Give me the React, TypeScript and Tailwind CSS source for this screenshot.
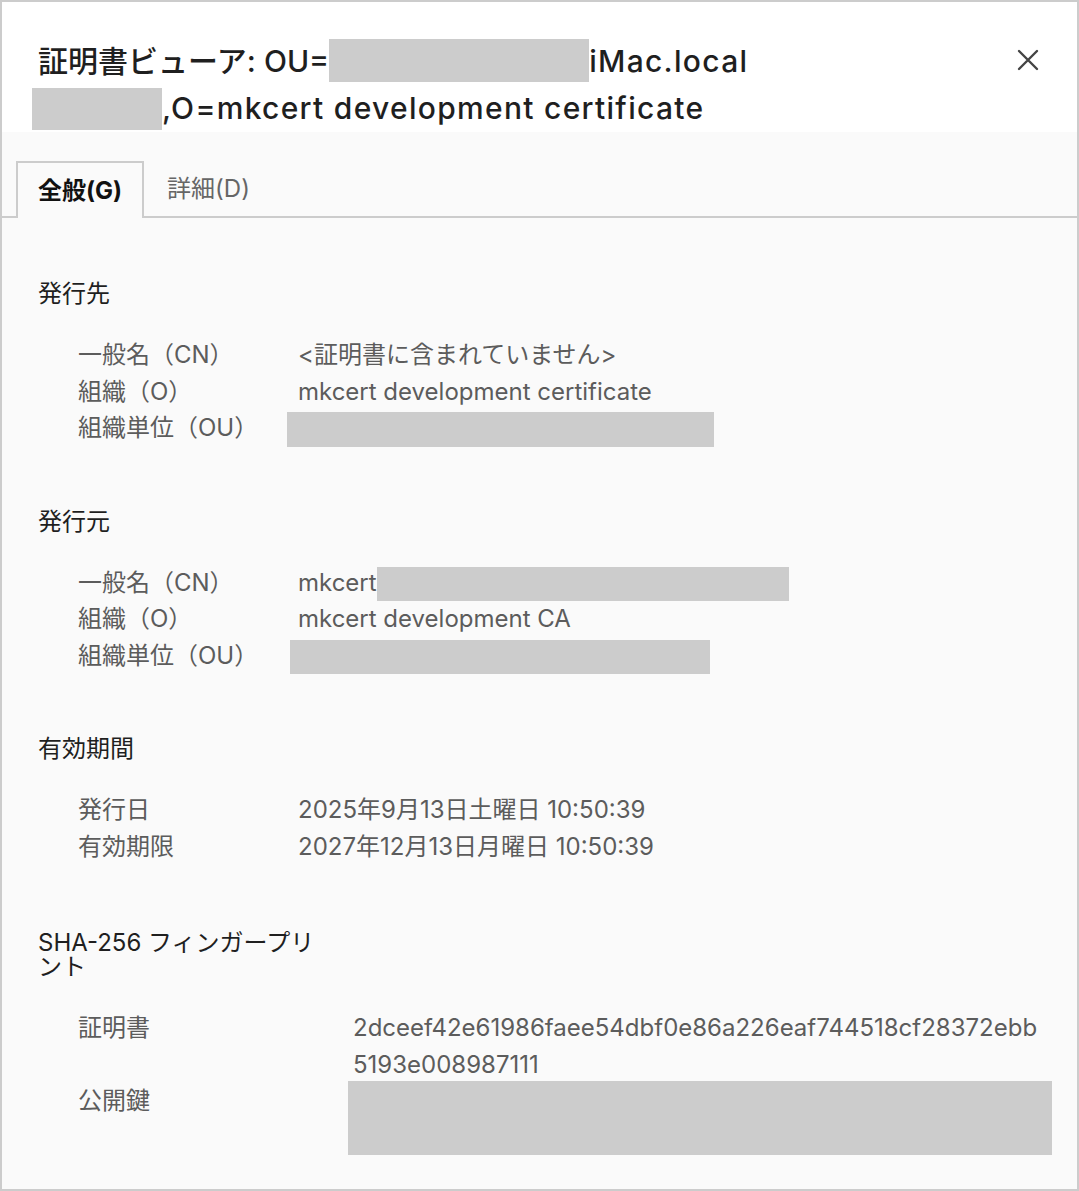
import React from 'react';

const FONT = '"Inter", "Noto Sans CJK JP", sans-serif';

// grey box standing in for redacted text
function Redact({ className }: { className: string }) {
  return <span className={`inline-block bg-[#cccccc] ${className}`} />;
}

function Row({
  label,
  children,
  labelWidth = 'w-[260px]',
}: {
  label: string;
  children: React.ReactNode;
  labelWidth?: string;
}) {
  return (
    <div className="flex leading-[36.5px]">
      <div className={`${labelWidth} shrink-0 pl-[40px] text-[#5c5c5c]`}>{label}</div>
      <div className="text-[#5c5c5c] whitespace-nowrap">{children}</div>
    </div>
  );
}

function Section({
  title,
  children,
  titleClass = '',
}: {
  title: React.ReactNode;
  children: React.ReactNode;
  titleClass?: string;
}) {
  return (
    <section className="flex flex-col">
      <h2 className={`text-[24px] leading-[24px] text-[#1f1f1f] font-normal whitespace-nowrap ${titleClass}`}>{title}</h2>
      <div className="mt-[31px] flex flex-col">{children}</div>
    </section>
  );
}

export default function App() {
  return (
    <div
      className="w-[1079px] h-[1191px] border-2 border-[#cccccc] bg-[#fafafa] flex flex-col overflow-hidden"
      style={{ fontFamily: FONT }}
    >
      {/* Header */}
      <div className="bg-white flex justify-between items-start pl-[36px] pr-[37px] pt-[36px]">
        <h1 className="text-[30px] leading-[47px] text-[#1f1f1f] font-medium whitespace-nowrap">
          <div>
            証明書ビューア: OU=
            <Redact className="w-[260px] h-[43px] align-top mt-[1px]" />
            <span className="tracking-[1.3px]">iMac.local</span>
          </div>
          <div>
            <Redact className="w-[130px] h-[42px] align-top mt-[3px] ml-[-6px]" />
            <span className="tracking-[1.3px]">,O=mkcert development certificate</span>
          </div>
        </h1>
        <button className="mt-[10px] w-[24px] h-[24px] flex items-center justify-center text-[#444444]" aria-label="閉じる">
          <svg width="22" height="22" viewBox="0 0 22 22" fill="none" stroke="currentColor" strokeWidth="2.4" strokeLinecap="round">
            <path d="M2 2 L20 20 M20 2 L2 20" />
          </svg>
        </button>
      </div>

      {/* Tabs */}
      <div className="mt-[29px] flex items-end px-[14px] border-b-2 border-[#cccccc]">
        <div className="h-[57px] -mb-[2px] border-2 border-b-0 border-[#cccccc] bg-[#fafafa] px-[20px] flex items-center text-[24px] font-bold text-[#111111]">
          全般(G)
        </div>
        <div className="h-[55px] px-[23px] flex items-center text-[24px] text-[#666666]">詳細(D)</div>
      </div>

      {/* Content */}
      <div className="px-[36px] pt-[64px] flex flex-col gap-[63px] text-[24px]">
        <Section title="発行先">
          <Row label="一般名（CN）">&lt;証明書に含まれていません&gt;</Row>
          <Row label="組織（O）">mkcert development certificate</Row>
          <Row label="組織単位（OU）">
            <Redact className="w-[427px] h-[35px] align-middle ml-[-11px]" />
          </Row>
        </Section>

        <Section title="発行元">
          <Row label="一般名（CN）">
            mkcert
            <Redact className="w-[412px] h-[34px] align-middle" />
          </Row>
          <Row label="組織（O）">mkcert development CA</Row>
          <Row label="組織単位（OU）">
            <Redact className="w-[420px] h-[34px] align-middle ml-[-8px]" />
          </Row>
        </Section>

        <Section title="有効期間">
          <Row label="発行日">2025年9月13日土曜日 10:50:39</Row>
          <Row label="有効期限">2027年12月13日月曜日 10:50:39</Row>
        </Section>

        <Section
          titleClass="pt-[3px]"
          title={
            <>
              SHA-256 フィンガープリ
              <br />
              ント
            </>
          }
        >
          <Row label="証明書" labelWidth="w-[315px]">
            2dceef42e61986faee54dbf0e86a226eaf744518cf28372ebb
            <br />
            5193e008987111
          </Row>
          <div className="flex leading-[36.5px]">
            <div className="w-[315px] shrink-0 pl-[40px] text-[#5c5c5c]">公開鍵</div>
            <div className="shrink-0 mt-[-2px] ml-[-5px] w-[704px] h-[74px] bg-[#cccccc]" />
          </div>
        </Section>
      </div>
    </div>
  );
}
